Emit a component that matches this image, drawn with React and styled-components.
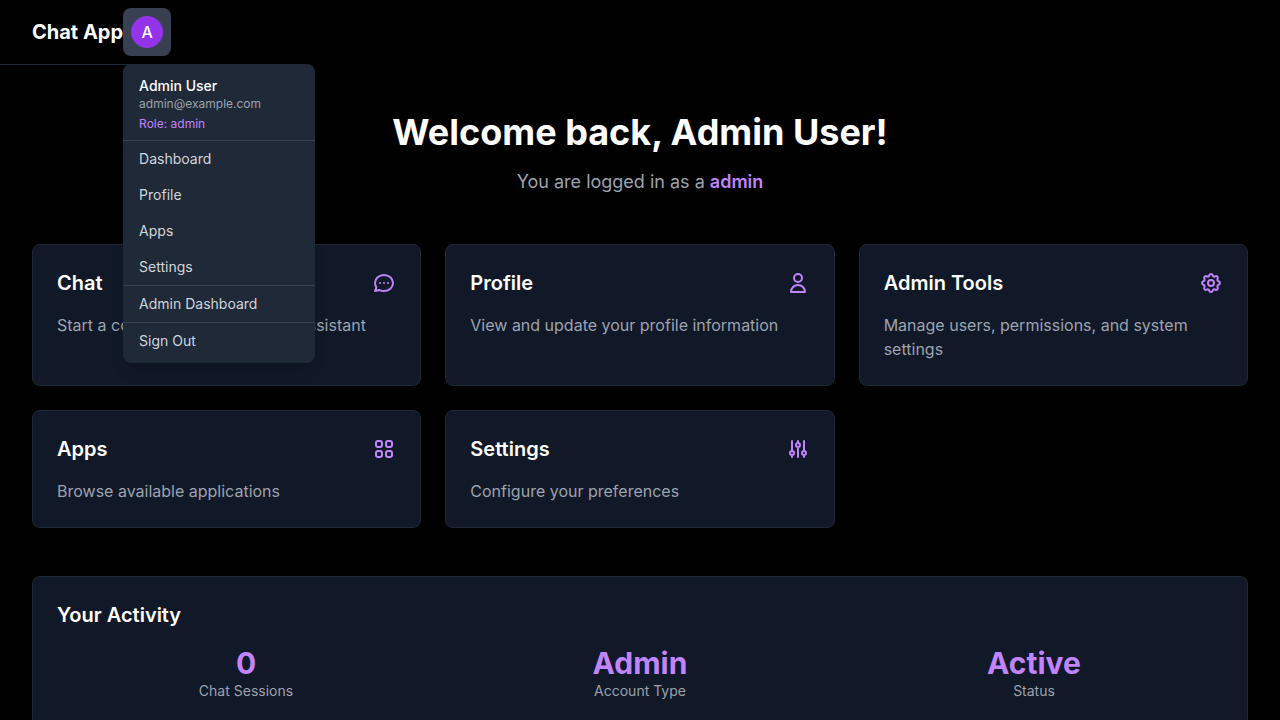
import React from "react";
import styled, { createGlobalStyle } from "styled-components";

const GlobalStyle = createGlobalStyle`
  *, *::before, *::after { box-sizing: border-box; }
  body {
    margin: 0;
    background: #000000;
    color: #ffffff;
    font-family: Inter, "Liberation Sans", sans-serif;
    font-size: 16px;
    line-height: 24px;
  }
  h1, h2, p, ul, dl, dd { margin: 0; padding: 0; }
  ul { list-style: none; }
  a { color: inherit; text-decoration: none; }
`;

const Header = styled.header`
  display: flex;
  align-items: center;
  width: fit-content;
  height: 64px;
  padding: 0 32px;
  box-shadow: 0 1px 0 #1f2937;
`;

const Brand = styled.a`
  font-size: 20px;
  line-height: 28px;
  font-weight: 700;
`;

const UserMenu = styled.div`
  position: relative;
`;

const AvatarButton = styled.button`
  display: block;
  padding: 8px;
  border: 0;
  border-radius: 8px;
  background: #374151;
  color: #ffffff;
  font: inherit;
  cursor: pointer;
`;

const Avatar = styled.span`
  display: flex;
  align-items: center;
  justify-content: center;
  width: 32px;
  height: 32px;
  border-radius: 50%;
  background: #9333ea;
  font-weight: 500;
`;

const Dropdown = styled.div`
  position: absolute;
  top: 100%;
  left: 0;
  z-index: 10;
  width: 192px;
  margin-top: 8px;
  padding: 4px 0;
  border-radius: 8px;
  background: #1f2937;
  box-shadow: 0 10px 15px -3px rgba(0, 0, 0, 0.1), 0 4px 6px -4px rgba(0, 0, 0, 0.1);
`;

const Identity = styled.div`
  padding: 8px 16px;
  font-size: 12px;
  line-height: 16px;
  color: #9ca3af;
`;

const UserName = styled.p`
  font-size: 14px;
  line-height: 20px;
  font-weight: 500;
  color: #ffffff;
`;

const Role = styled.p`
  margin-top: 4px;
  color: #c084fc;
`;

const MenuGroup = styled.ul`
  border-top: 1px solid #374151;
`;

const MenuItem = styled.a`
  display: block;
  width: 100%;
  padding: 8px 16px;
  border: 0;
  background: transparent;
  color: #d1d5db;
  font: inherit;
  font-size: 14px;
  line-height: 20px;
  text-align: left;
  cursor: pointer;
  &:hover { background: #374151; }
`;

const Main = styled.main`
  padding: 48px 32px;
`;

const Hero = styled.section`
  margin-bottom: 48px;
  text-align: center;
`;

const Title = styled.h1`
  margin-bottom: 16px;
  font-size: 36px;
  line-height: 40px;
  font-weight: 700;
`;

const Subtitle = styled.p`
  font-size: 18px;
  line-height: 28px;
  color: #9ca3af;
`;

const Accent = styled.span`
  font-weight: 600;
  color: #c084fc;
`;

const CardGrid = styled.section`
  display: grid;
  grid-template-columns: repeat(3, minmax(0, 1fr));
  gap: 24px;
  margin-bottom: 48px;
`;

const Card = styled.a`
  display: block;
  padding: 24px;
  border: 1px solid #1f2937;
  border-radius: 8px;
  background: #111827;
`;

const CardHead = styled.div`
  display: flex;
  align-items: center;
  justify-content: space-between;
  margin-bottom: 16px;
`;

const Heading = styled.h2`
  font-size: 20px;
  line-height: 28px;
  font-weight: 600;
`;

const CardText = styled.p`
  color: #9ca3af;
`;

const Icon = styled.svg`
  width: 24px;
  height: 24px;
  fill: none;
  stroke: #c084fc;
  stroke-width: 2;
  stroke-linecap: round;
  stroke-linejoin: round;
`;

const Panel = styled.section`
  padding: 24px;
  border: 1px solid #1f2937;
  border-radius: 8px;
  background: #111827;
`;

const Stats = styled.dl`
  display: grid;
  grid-template-columns: repeat(3, minmax(0, 1fr));
  gap: 16px;
  margin-top: 16px;
`;

const Stat = styled.div`
  display: flex;
  flex-direction: column-reverse;
  text-align: center;
`;

const StatLabel = styled.dt`
  font-size: 14px;
  line-height: 20px;
  color: #9ca3af;
`;

const StatValue = styled.dd`
  font-size: 30px;
  line-height: 36px;
  font-weight: 700;
  color: #c084fc;
`;

const cards = [
  {
    title: "Chat",
    text: "Start a conversation with our AI assistant",
    paths: [
      "M8 12h.01M12 12h.01M16 12h.01M21 12c0 4.418-4.03 8-9 8a9.863 9.863 0 01-4.255-.949L3 20l1.395-3.72C3.512 15.042 3 13.574 3 12c0-4.418 4.03-8 9-8s9 3.582 9 8z",
    ],
  },
  {
    title: "Profile",
    text: "View and update your profile information",
    paths: ["M16 7a4 4 0 11-8 0 4 4 0 018 0zM12 14a7 7 0 00-7 7h14a7 7 0 00-7-7z"],
  },
  {
    title: "Admin Tools",
    text: "Manage users, permissions, and system settings",
    paths: [
      "M10.325 4.317c.426-1.756 2.924-1.756 3.35 0a1.724 1.724 0 002.573 1.066c1.543-.94 3.31.826 2.37 2.37a1.724 1.724 0 001.065 2.572c1.756.426 1.756 2.924 0 3.35a1.724 1.724 0 00-1.066 2.573c.94 1.543-.826 3.31-2.37 2.37a1.724 1.724 0 00-2.572 1.065c-.426 1.756-2.924 1.756-3.35 0a1.724 1.724 0 00-2.573-1.066c-1.543.94-3.31-.826-2.37-2.37a1.724 1.724 0 00-1.065-2.572c-1.756-.426-1.756-2.924 0-3.35a1.724 1.724 0 001.066-2.573c-.94-1.543.826-3.31 2.37-2.37.996.608 2.296.07 2.572-1.065z",
      "M15 12a3 3 0 11-6 0 3 3 0 016 0z",
    ],
  },
  {
    title: "Apps",
    text: "Browse available applications",
    paths: [
      "M4 6a2 2 0 012-2h2a2 2 0 012 2v2a2 2 0 01-2 2H6a2 2 0 01-2-2V6zM14 6a2 2 0 012-2h2a2 2 0 012 2v2a2 2 0 01-2 2h-2a2 2 0 01-2-2V6zM4 16a2 2 0 012-2h2a2 2 0 012 2v2a2 2 0 01-2 2H6a2 2 0 01-2-2v-2zM14 16a2 2 0 012-2h2a2 2 0 012 2v2a2 2 0 01-2 2h-2a2 2 0 01-2-2v-2z",
    ],
  },
  {
    title: "Settings",
    text: "Configure your preferences",
    paths: [
      "M12 6V4m0 2a2 2 0 100 4m0-4a2 2 0 110 4m-6 8a2 2 0 100-4m0 4a2 2 0 110-4m0 4v2m0-6V4m6 6v10m6-2a2 2 0 100-4m0 4a2 2 0 110-4m0 4v2m0-6V4",
    ],
  },
];

const menuGroups = [["Dashboard", "Profile", "Apps", "Settings"], ["Admin Dashboard"]];

const stats = [
  ["0", "Chat Sessions"],
  ["Admin", "Account Type"],
  ["Active", "Status"],
];

export default function App() {
  return (
    <>
      <GlobalStyle />
      <Header>
        <Brand href="#">Chat App</Brand>
        <UserMenu>
          <AvatarButton type="button" aria-haspopup="true" aria-expanded="true">
            <Avatar>A</Avatar>
          </AvatarButton>
          <Dropdown>
            <Identity>
              <UserName>Admin User</UserName>
              <p>admin@example.com</p>
              <Role>Role: admin</Role>
            </Identity>
            {menuGroups.map((items) => (
              <MenuGroup key={items[0]}>
                {items.map((item) => (
                  <li key={item}>
                    <MenuItem href="#">{item}</MenuItem>
                  </li>
                ))}
              </MenuGroup>
            ))}
            <MenuGroup>
              <li>
                <MenuItem as="button" type="button">Sign Out</MenuItem>
              </li>
            </MenuGroup>
          </Dropdown>
        </UserMenu>
      </Header>
      <Main>
        <Hero>
          <Title>Welcome back, Admin User!</Title>
          <Subtitle>
            You are logged in as a <Accent>admin</Accent>
          </Subtitle>
        </Hero>
        <CardGrid>
          {cards.map((card) => (
            <Card key={card.title} href="#">
              <CardHead>
                <Heading>{card.title}</Heading>
                <Icon viewBox="0 0 24 24" aria-hidden="true">
                  {card.paths.map((d) => (
                    <path key={d} d={d} />
                  ))}
                </Icon>
              </CardHead>
              <CardText>{card.text}</CardText>
            </Card>
          ))}
        </CardGrid>
        <Panel>
          <Heading>Your Activity</Heading>
          <Stats>
            {stats.map(([value, label]) => (
              <Stat key={label}>
                <StatLabel>{label}</StatLabel>
                <StatValue>{value}</StatValue>
              </Stat>
            ))}
          </Stats>
        </Panel>
      </Main>
    </>
  );
}
